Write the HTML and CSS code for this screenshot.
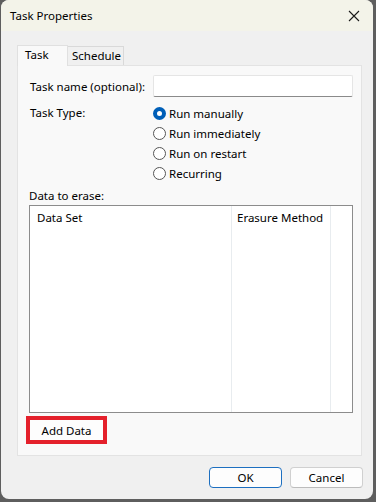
FILE: index.html
```html
<!DOCTYPE html>
<html>
<head>
<meta charset="utf-8">
<link rel="stylesheet" href="styles.css">
</head>
<body>
<div class="window">
  <div class="titlebar">
    <span class="title">Task Properties</span>
    <svg class="close" width="12" height="12" viewBox="0 0 12 12"><path d="M1 1L11 11M11 1L1 11" stroke="#1a1a1a" stroke-width="1.1" fill="none"/></svg>
  </div>
  <div class="content">
    <div class="tabs">
      <div class="tab active">Task</div>
      <div class="tab">Schedule</div>
    </div>
    <div class="panel">
      <div class="row name-row">
        <span class="label">Task name (optional):</span>
        <div class="textbox"></div>
      </div>
      <div class="row type-row">
        <span class="label">Task Type:</span>
        <div class="radios">
          <div class="radio checked"><span class="dot"></span>Run manually</div>
          <div class="radio"><span class="dot"></span>Run immediately</div>
          <div class="radio"><span class="dot"></span>Run on restart</div>
          <div class="radio"><span class="dot"></span>Recurring</div>
        </div>
      </div>
      <div class="erase-label">Data to erase:</div>
      <div class="listbox">
        <div class="col col1">Data Set</div>
        <div class="col col2">Erasure Method</div>
        <div class="col col3"></div>
      </div>
      <div class="highlight"><div class="btn add">Add Data</div></div>
    </div>
    <div class="footer">
      <div class="btn ok">OK</div>
      <div class="btn">Cancel</div>
    </div>
  </div>
</div>
</body>
</html>
```
FILE: styles.css
```css
html, body { margin: 0; padding: 0; }
body {
  width: 376px; height: 502px;
  background: #5e5e5e;
  font-family: "Noto Sans", "Open Sans", sans-serif;
  font-size: 11.5px;
  color: #000;
  overflow: hidden;
}
.window {
  margin-left: 1px;
  width: 372px; height: 499px;
  background: #f0f0f0;
  border-radius: 8px;
  overflow: hidden;
  display: flex; flex-direction: column;
}
.titlebar {
  height: 31px;
  background: #f3f3e9;
  display: flex; align-items: center; justify-content: space-between;
  padding: 0 13px 0 9px;
}
.title { font-size: 11.5px; }
.content { flex: 1; display: flex; flex-direction: column; padding: 14px 0 0 16px; }
.tabs { display: flex; align-items: flex-end; height: 20px; }
.tab {
  height: 19px; padding: 0 4px; line-height: 18px;
  border: 1px solid #d9d9d9; border-bottom: none;
  background: #f0f0f0;
  box-sizing: border-box;
  margin-left: -1px;
}
.tab:first-child { margin-left: 0; }
.tab.active {
  height: 21px; width: 51px; padding-left: 7px;
  background: #f9f9f9; border-color: #e0e0e0;
  position: relative; z-index: 1; margin-bottom: -1px; line-height: 17px;
}
.tab:nth-child(2) { width: 57px; padding-left: 4px; }
.panel {
  width: 345px; height: 391px; box-sizing: border-box;
  background: #f9f9f9;
  border: 1px solid #e3e3e3;
  padding: 9px 8px 0 12px;
  display: flex; flex-direction: column;
}
.row { display: flex; }
.label { width: 123px; }
.name-row { align-items: center; height: 22px; }
.textbox {
  width: 200px; height: 22px; box-sizing: border-box;
  background: #fff; border: 1px solid #e5e5e5; border-bottom-color: #8a8a8a;
  border-radius: 2px;
}
.type-row { margin-top: 6px; }
.type-row .label { line-height: 20px; }
.radios { display: flex; flex-direction: column; }
.radio { display: flex; align-items: center; height: 20px; }
.dot {
  width: 13px; height: 13px; box-sizing: border-box; border-radius: 50%;
  border: 1px solid #555; background: #fff; margin-right: 3px;
}
.radio.checked .dot { border: 4px solid #005fb8; background: #fff; }
.erase-label { margin-top: 4px; height: 18px; line-height: 18px; margin-left: -1px; }
.listbox {
  width: 324px; height: 208px; box-sizing: border-box;
  margin-left: -1px;
  background: #fff; border: 1px solid #8c8c8c;
  display: flex;
}
.col { border-right: 1px solid #e8ecef; padding: 4px 0 0 7px; box-sizing: border-box; }
.col1 { width: 202px; }
.col2 { width: 99px; padding-left: 5px; }
.col3 { flex: 1; border-right: none; }
.highlight {
  margin-top: 3px; margin-left: -4px;
  width: 81px; height: 28px; box-sizing: border-box;
  border: 4px solid #e4202b;
  background: #fdfdfd;
  display: flex; align-items: center; justify-content: center;
}
.btn {
  width: 73px; height: 21px; box-sizing: border-box;
  background: #fdfdfd; border: 1px solid #d0d0d0; border-bottom-color: #bcbcbc;
  border-radius: 4px;
  display: flex; align-items: center; justify-content: center;
}
.btn.add { border: none; width: 71px; height: 20px; border-radius: 0; }
.footer { display: flex; justify-content: flex-end; gap: 8px; margin-top: 11px; padding-right: 10px; }
.btn.ok { border: 1px solid #1d6fc0; }
```
